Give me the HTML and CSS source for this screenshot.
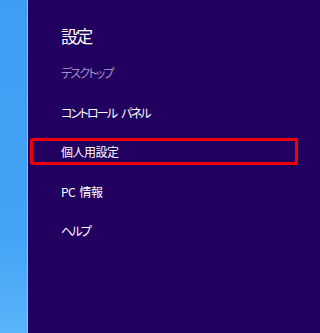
FILE: index.html
```html
<!DOCTYPE html>
<html lang="ja">
<head>
<meta charset="utf-8">
<link rel="stylesheet" href="styles.css">
</head>
<body>
<div class="screen">
  <div class="desktop"></div>
  <div class="edge"></div>
  <div class="panel">
    <div class="title">設定</div>
    <div class="list">
      <div class="item dim kana">デスクトップ</div>
      <div class="item kana">コントロール パネル</div>
      <div class="item"><div class="highlight">個人用設定</div></div>
      <div class="item">PC 情報</div>
      <div class="item kana">ヘルプ</div>
    </div>
  </div>
</div>
</body>
</html>
```

FILE: styles.css
```css
html, body {
  margin: 0;
  padding: 0;
  background: #21005f;
}
body {
  min-height: 100vh;
  font-family: "Noto Sans CJK JP", "Noto Sans", sans-serif;
  font-feature-settings: "palt";
}
.screen {
  display: flex;
  width: 300px;
  height: 333px;
}
.desktop {
  width: 27px;
  flex: none;
  background: linear-gradient(to bottom, #3c9df2 0%, #42a3f6 70%, #5ab4fa 100%);
}
.edge {
  width: 1px;
  flex: none;
  background: #86c8f8;
}
.panel {
  flex: 1;
  background: #21005f;
  padding-left: 33px;
  color: #ffffff;
}
.title {
  margin-top: 24px;
  height: 24px;
  line-height: 24px;
  font-size: 17px;
  letter-spacing: -1.8px;
}
.list {
  margin-top: 5px;
}
.item {
  height: 39.5px;
  display: flex;
  align-items: center;
  font-size: 12px;
  letter-spacing: -0.5px;
  word-spacing: 2px;
}
.item.kana {
  letter-spacing: -1.8px;
  word-spacing: 4px;
}
.item.dim {
  color: #9c93c9;
}
.highlight {
  box-sizing: border-box;
  flex: 1;
  height: 27px;
  margin-left: -31px;
  margin-right: 2px;
  padding-left: 28px;
  border: 3px solid #f0000c;
  border-radius: 2px;
  display: flex;
  align-items: center;
}
```
